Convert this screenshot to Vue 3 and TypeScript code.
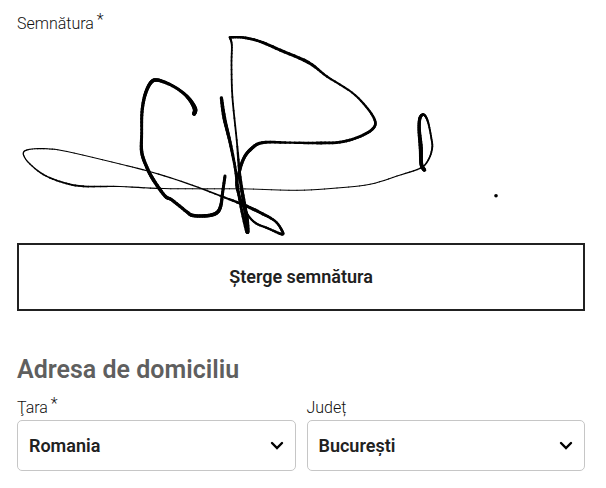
<script setup lang="ts">
import { computed, ref } from 'vue'

type Point = [x: number, y: number, width: number]

interface Segment {
  d: string
  width: number
}

const STEPS = 6

const initialStrokes: Point[][] = [
  [
    [194, 114, 3.8], [195, 109, 4.6], [190, 100, 3.8], [182, 92, 3], [170, 84.5, 3],
    [157, 80, 3.6], [150.5, 83, 3.6], [145, 95, 3.4], [142, 112, 3.2], [141.7, 133, 2.8],
    [141.7, 152, 3.4], [146.7, 167, 3.4], [153.5, 180, 3.6], [165, 196, 3.4], [172, 200, 3.2],
    [187, 212, 3.2], [193, 215.5, 3.4], [207, 215.7, 3.6], [216.5, 213, 3.6], [220.7, 206, 3.4],
    [222.7, 192, 3], [225, 176, 3],
  ],
  [
    [221.4, 98, 3.2], [224.3, 118, 3.8], [230, 142, 3.2], [235, 167, 2.8], [237.4, 185, 2.8],
    [241, 207, 2.8], [247.2, 232, 3.6], [247, 220, 3.8], [244, 203, 4], [240, 177, 3.2],
    [236.7, 140, 1.8], [232.4, 97, 1.8], [231.5, 65, 1.7], [231.8, 45, 1.8], [229.8, 37.3, 2.2],
  ],
  [
    [229.8, 37.3, 2.2],
    [243, 37.5, 2.6], [260, 41.5, 2.8], [280, 50, 3], [308.5, 62.5, 3.2], [327, 76.5, 2.2],
    [352, 92.5, 2], [368, 109, 2.2], [375.3, 122, 2.6], [371.5, 130, 2.8], [358, 137.3, 2.8],
    [340, 142.2, 2.8], [317, 143, 2.8], [290, 142.7, 2.2], [262, 142.7, 3], [250, 150, 3.4],
    [243.5, 159, 3.2], [239.3, 171.7, 3.2], [236.7, 185, 3], [240.7, 200, 2.4], [248, 215, 2],
    [256, 223.3, 2.2], [268.3, 228.5, 2.2], [281.7, 234.2, 2.6], [282, 230.7, 2.6], [275, 221, 2.4],
    [260, 212.5, 3], [244, 205, 3.2], [220, 195.7, 1.8], [187, 183.3, 1.3], [153, 172.5, 1.3],
    [120, 164, 1], [67, 151.5, 1], [47, 148.8, 1.1], [30, 149.3, 1.1], [23.3, 153, 1.2],
    [28.3, 162.3, 1.2], [43.3, 174.5, 1.5], [63, 182.5, 1.8], [83.3, 186.3, 1.9], [120, 186.5, 1.2],
    [157, 188.4, 1.1], [200, 188.8, 1], [245, 188.9, 0.9], [297, 190.3, 1], [337, 188, 1],
    [370, 184.3, 1], [397, 176, 1.1], [420, 168.3, 1.3], [428.3, 160, 1.6], [432.2, 148, 1.8],
    [431.3, 138, 1.8], [428.3, 123, 2], [425.3, 116, 2.2], [422.3, 114.8, 2.6], [419.7, 119, 3.2],
    [419.2, 130, 3.4], [420.8, 148, 4.2], [421.3, 164, 3.8], [424.4, 170, 3.8],
  ],
  [[496, 195.7, 3.6]],
]

const strokes = ref<Point[][]>(initialStrokes)

const country = ref('Romania')
const county = ref('București')

function clearSignature(): void {
  strokes.value = []
}

// Catmull-Rom interpolation of one coordinate.
function spline(a: number, b: number, c: number, d: number, t: number): number {
  return 0.5 * (2 * b + (c - a) * t + (2 * a - 5 * b + 4 * c - d) * t * t + (3 * b - a - 3 * c + d) * t * t * t)
}

const segments = computed<Segment[]>(() => {
  const result: Segment[] = []
  for (const points of strokes.value) {
    if (points.length === 1) {
      const [x, y, width] = points[0]
      result.push({ d: `M${x} ${y}h0.01`, width })
      continue
    }
    for (let i = 0; i < points.length - 1; i++) {
      const a = points[Math.max(i - 1, 0)]
      const b = points[i]
      const c = points[i + 1]
      const e = points[Math.min(i + 2, points.length - 1)]
      let from = `${b[0]} ${b[1]}`
      for (let s = 1; s <= STEPS; s++) {
        const t = s / STEPS
        const x = spline(a[0], b[0], c[0], e[0], t).toFixed(2)
        const y = spline(a[1], b[1], c[1], e[1], t).toFixed(2)
        result.push({ d: `M${from}L${x} ${y}`, width: b[2] + (c[2] - b[2]) * t })
        from = `${x} ${y}`
      }
    }
  }
  return result
})
</script>

<template>
  <form class="form" @submit.prevent>
    <div id="signature-label" class="label">Semnătura <span class="required">*</span></div>
    <svg class="pad" viewBox="17 36 568 207" preserveAspectRatio="xMinYMin meet" role="img" aria-labelledby="signature-label">
      <path v-for="(segment, i) in segments" :key="i" :d="segment.d" :stroke-width="segment.width" />
    </svg>
    <button class="clear" type="button" @click="clearSignature">Șterge semnătura</button>

    <h2 class="title">Adresa de domiciliu</h2>
    <div class="fields">
      <div class="field">
        <label class="label" for="country">Ţara <span class="required">*</span></label>
        <div class="control">
          <select id="country" v-model="country" class="select" required>
            <option>Romania</option>
          </select>
          <svg class="chevron" viewBox="0 0 14 10" aria-hidden="true"><path d="M2 2l5 5 5-5" /></svg>
        </div>
      </div>
      <div class="field">
        <label class="label" for="county">Județ</label>
        <div class="control">
          <select id="county" v-model="county" class="select">
            <option>București</option>
          </select>
          <svg class="chevron" viewBox="0 0 14 10" aria-hidden="true"><path d="M2 2l5 5 5-5" /></svg>
        </div>
      </div>
    </div>
  </form>
</template>

<style>
body {
  margin: 0;
  background: #fff;
}
</style>

<style scoped>
.form {
  padding: 12px 21px 16px 17px;
  font-family: Roboto, "Liberation Sans", sans-serif;
  color: #111;
}

.label {
  display: block;
  font-size: 16px;
  font-weight: 300;
  line-height: 24px;
}

.required {
  display: inline-block;
  margin-left: -1px;
  line-height: 16px;
  vertical-align: 4px;
}

.pad {
  display: block;
  width: 100%;
  height: 207px;
}

.pad path {
  fill: none;
  stroke: #000;
  stroke-linecap: round;
}

.clear {
  display: block;
  box-sizing: border-box;
  width: 100%;
  padding: 20px;
  border: 2px solid #212121;
  background: #fff;
  color: #212121;
  font-family: inherit;
  font-size: 18px;
  font-weight: 600;
  line-height: 24px;
  cursor: pointer;
}

.title {
  margin: 42px 0 9px;
  color: #5f5f5f;
  font-size: 25px;
  font-weight: 600;
  line-height: 34px;
}

.fields {
  display: grid;
  grid-template-columns: 1fr 1fr;
  gap: 11px;
}

.control {
  position: relative;
}

.select {
  display: block;
  box-sizing: border-box;
  width: 100%;
  height: 51px;
  padding: 0 40px 0 11px;
  border: 1px solid #c6c6c6;
  border-radius: 5px;
  appearance: none;
  background: #fff;
  color: #212121;
  font-family: inherit;
  font-size: 18px;
  font-weight: 600;
}

.chevron {
  position: absolute;
  top: 21px;
  right: 12px;
  width: 14px;
  height: 10px;
  pointer-events: none;
}

.chevron path {
  fill: none;
  stroke: #000;
  stroke-width: 2.4;
  stroke-linecap: round;
}
</style>
